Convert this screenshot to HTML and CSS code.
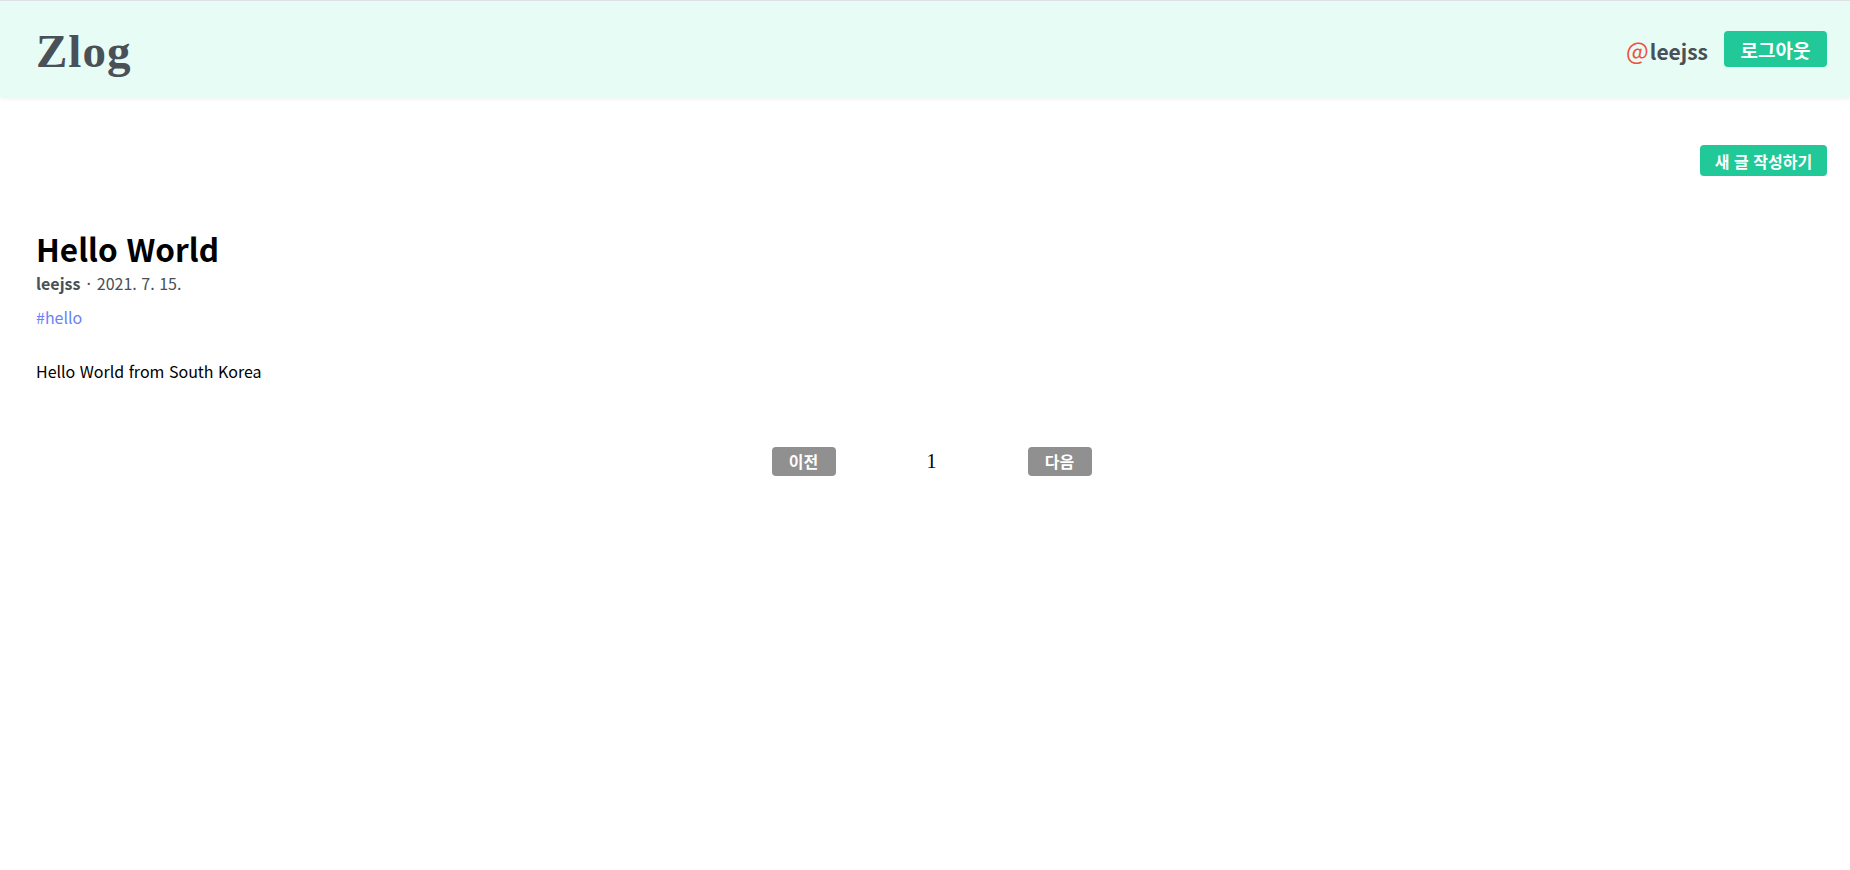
FILE: index.html
```html
<!DOCTYPE html>
<html lang="ko">
<head>
<meta charset="utf-8">
<title>Zlog</title>
<link rel="stylesheet" href="styles.css">
</head>
<body>
<header class="header">
  <div class="header-inner">
    <div class="logo">Zlog</div>
    <div class="user">
      <span class="username"><span class="at">@</span>leejss</span>
      <button class="btn btn-teal btn-logout">로그아웃</button>
    </div>
  </div>
</header>
<main class="content">
  <div class="write-row">
    <button class="btn btn-teal btn-write">새 글 작성하기</button>
  </div>
  <article class="post">
    <h2 class="post-title">Hello World</h2>
    <div class="post-meta"><b class="author">leejss</b><span class="dot">·</span><span class="date">2021. 7. 15.</span></div>
    <div class="tags"><span class="tag">#hello</span></div>
    <p class="post-body">Hello World from South Korea</p>
  </article>
  <nav class="pagination">
    <button class="btn btn-gray">이전</button>
    <div class="page-num">1</div>
    <button class="btn btn-gray">다음</button>
  </nav>
</main>
</body>
</html>
```
FILE: styles.css
```css
* { box-sizing: border-box; }
html, body { margin: 0; padding: 0; background: #fff; }
body {
  font-family: "Noto Sans CJK KR", "Noto Sans", sans-serif;
  color: #000;
  border-top: 1px solid #dde1e5;
}
.header {
  background: #e6fcf5;
  height: 96px;
  box-shadow: 0 2px 4px rgba(0,0,0,0.06);
  position: relative;
}
.header-inner {
  height: 100%;
  display: flex;
  align-items: center;
  justify-content: space-between;
  padding: 0 23px 0 36px;
}
.logo {
  font-family: "Liberation Serif", serif;
  font-weight: bold;
  font-size: 47px;
  color: #495057;
  letter-spacing: 1px;
  margin-top: 4px;
}
.user { display: flex; align-items: center; gap: 16px; }
.username {
  font-size: 21px;
  font-weight: 700;
  color: #495057;
}
.at { color: #f0503c; font-size: 24px; font-weight: 400; margin-right: 1px; }
.btn {
  border: none;
  border-radius: 4px;
  color: #fff;
  font-family: "Noto Sans CJK KR", sans-serif;
  font-weight: bold;
  cursor: pointer;
  padding: 0;
}
.btn-teal { background: #20c997; }
.btn-logout { width: 103px; height: 36px; font-size: 19px; }
.content { padding: 0 23px 0 36px; }
.write-row {
  display: flex;
  justify-content: flex-end;
  padding-top: 48px;
}
.btn-write { width: 127px; height: 31px; font-size: 16px; }
.post { margin-top: 54px; }
.post-title {
  margin: 0;
  font-size: 31.5px;
  font-weight: bold;
  line-height: 1.2;
}
.post-meta {
  font-size: 16px;
  color: #495057;
  margin-top: 3px;
}
.author { font-weight: bold; }
.dot { margin: 0 6px; }
.tags { margin-top: 10px; font-size: 16px; }
.tag { color: #6a7ffb; }
.post-body { margin: 30px 0 0; font-size: 16px; }
.pagination {
  width: 320px;
  margin: 64px auto 0;
  display: flex;
  justify-content: space-between;
  align-items: center;
}
.btn-gray { background: #909090; width: 64px; height: 29px; font-size: 16px; }
.page-num { font-family: "Liberation Serif", serif; font-size: 20px; }
```
